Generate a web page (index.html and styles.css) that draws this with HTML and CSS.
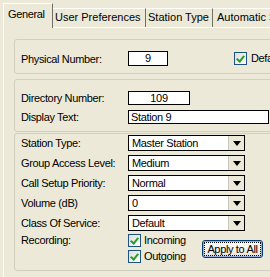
FILE: index.html
```html
<!DOCTYPE html>
<html lang="en">
<head>
  <meta charset="UTF-8">
  <title>Station Properties</title>
  <link rel="stylesheet" href="styles.css">
</head>
<body>
  <div class="tabs">
    <div class="tab active">General</div>
    <div class="tab tab-prefs">User Preferences</div>
    <div class="tab tab-type">Station Type</div>
    <div class="tab tab-auto">Automatic Speed Dial</div>
  </div>

  <div class="panel">
    <div class="group">
      <div class="row">
        <span class="label">Physical Number:</span>
        <div class="field field-phys">9</div>
        <label class="check check-def"><span class="box checked"></span>Default</label>
      </div>
    </div>

    <div class="group group-dir">
      <div class="row">
        <span class="label">Directory Number:</span>
        <div class="field field-dir">109</div>
      </div>
      <div class="row">
        <span class="label">Display Text:</span>
        <div class="field field-text">Station 9</div>
      </div>
    </div>

    <div class="group group-opts">
      <div class="row">
        <span class="label">Station Type:</span>
        <div class="combo"><span class="value">Master Station</span><span class="arrow"></span></div>
      </div>
      <div class="row">
        <span class="label">Group Access Level:</span>
        <div class="combo"><span class="value">Medium</span><span class="arrow"></span></div>
      </div>
      <div class="row">
        <span class="label">Call Setup Priority:</span>
        <div class="combo"><span class="value">Normal</span><span class="arrow"></span></div>
      </div>
      <div class="row">
        <span class="label">Volume (dB)</span>
        <div class="combo"><span class="value">0</span><span class="arrow"></span></div>
      </div>
      <div class="row">
        <span class="label">Class Of Service:</span>
        <div class="combo"><span class="value">Default</span><span class="arrow"></span></div>
      </div>
      <div class="row row-rec">
        <span class="label">Recording:</span>
        <div class="checks">
          <label class="check"><span class="box checked"></span>Incoming</label>
          <label class="check"><span class="box checked"></span>Outgoing</label>
        </div>
        <div class="btn"><span>Apply to All</span></div>
      </div>
    </div>
  </div>
</body>
</html>
```

FILE: styles.css
```css
body {
  margin: 0;
  width: 270px;
  height: 277px;
  overflow: hidden;
  background: #ece9d8;
  font-family: "Liberation Sans", Arial, sans-serif;
  font-size: 11px;
  letter-spacing: -0.35px;
  color: #000;
}

/* tab strip */
.tabs {
  display: flex;
  align-items: flex-end;
  height: 27px;
  padding-left: 3px;
  white-space: nowrap;
}
.tab {
  flex: none;
  box-sizing: border-box;
  height: 19px;
  padding: 2px 0 0 2px;
  line-height: 13px;
  letter-spacing: 0;
  border-top: 1px solid #fff;
  border-left: 1px solid #fff;
  border-right: 1px solid #716f64;
}
.tab.active {
  width: 50px;
  height: 25px;
  padding: 4px 0 0 4px;
  margin-bottom: -1px;
  background: #ece9d8;
  letter-spacing: -0.35px;
  position: relative;
}
.tab-prefs { width: 93px; border-left: none; }
.tab-type { width: 67px; border-left: none; }
.tab-auto { width: 80px; border-left: none; padding-left: 4px; }

/* panel */
.panel {
  margin-left: 3px;
  border-top: 1px solid #fff;
  border-left: 1px solid #fff;
  padding: 11px 0 0 10px;
  height: 260px;
  box-sizing: border-box;
}
.group {
  width: 300px;
  border: 1px solid #d0d0bf;
  border-radius: 3px;
  padding: 11px 0 7px 6px;
}
.group-dir {
  margin-top: 5px;
  display: grid;
  row-gap: 5px;
}
.group-opts {
  margin-top: 1px;
  padding-top: 1px;
  display: grid;
  row-gap: 4px;
}

.row {
  display: flex;
  align-items: center;
}
.label {
  width: 107px;
  flex: none;
}

/* text fields */
.field {
  box-sizing: border-box;
  height: 14px;
  line-height: 12px;
  border: 1px solid #000;
  background: #fff;
  padding: 0 2px;
}
.field-phys { width: 40px; height: 15px; line-height: 13px; text-align: center; }
.field-dir { width: 62px; text-align: center; }
.field-text { width: 141px; }

/* combo boxes */
.combo {
  box-sizing: border-box;
  display: flex;
  width: 117px;
  height: 16px;
  border: 1px solid #000;
  background: #fff;
}
.combo .value {
  flex: 1;
  padding-left: 3px;
  line-height: 14px;
}
.combo .arrow {
  width: 15px;
  background: #ece9d8;
  border-left: 1px solid #c9c7ba;
  display: flex;
  align-items: center;
  justify-content: center;
}
.combo .arrow::before {
  content: "";
  border-top: 5px solid #000;
  border-left: 4px solid transparent;
  border-right: 4px solid transparent;
  margin-top: 1px;
}

/* checkboxes */
.check {
  display: flex;
  align-items: center;
  gap: 3px;
  height: 13px;
  line-height: 13px;
}
.check-def {
  margin-left: 66px;
  gap: 4px;
}
.box {
  box-sizing: border-box;
  width: 13px;
  height: 13px;
  border: 1px solid #1c5180;
  background: linear-gradient(135deg, #dcdcd7, #fff);
  position: relative;
}
.box.checked::after {
  content: "";
  position: absolute;
  left: 3px;
  top: 1px;
  width: 3px;
  height: 6px;
  border-right: 2px solid #21a121;
  border-bottom: 2px solid #21a121;
  transform: rotate(40deg);
}

.row-rec {
  margin-top: -1px;
  align-items: flex-start;
}
.checks {
  width: 74px;
  display: flex;
  flex-direction: column;
  gap: 3px;
}
.row-rec .label {
  line-height: 13px;
}

/* button */
.btn {
  align-self: center;
  width: 61px;
  height: 18px;
  margin-top: 1px;
  padding: 1px;
  border: 1px solid #003c74;
  border-radius: 3px;
  background: linear-gradient(#fff, #ecebe6 80%, #d6d0c5);
  box-shadow: inset 0 0 0 1px #97aee2;
  white-space: nowrap;
  text-align: center;
  box-sizing: border-box;
}
.btn span {
  display: block;
  height: 14px;
  line-height: 12px;
  border: 1px dotted #000;
  box-sizing: border-box;
}
```
